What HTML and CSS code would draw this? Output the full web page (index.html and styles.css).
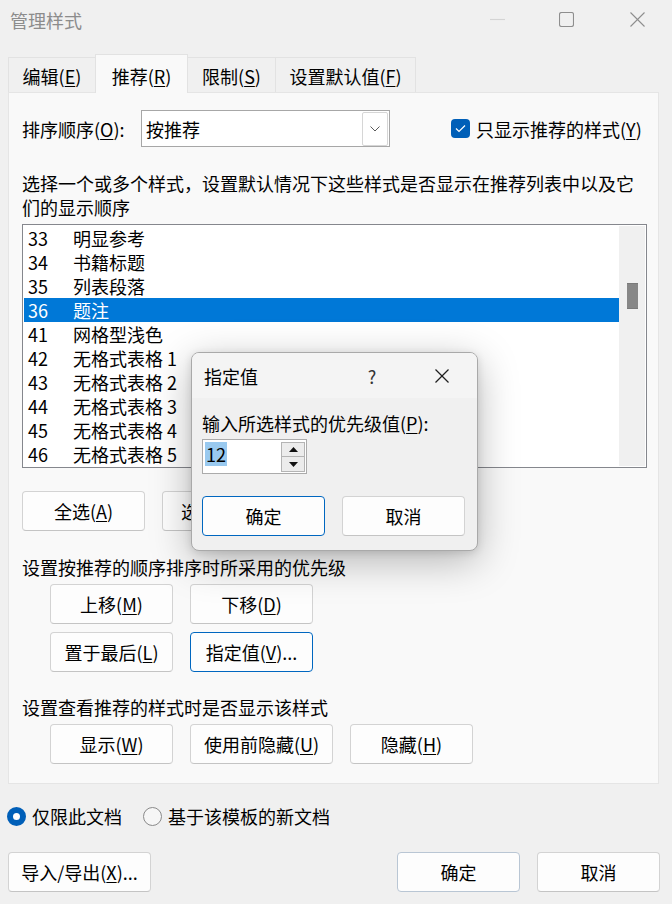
FILE: index.html
```html
<!DOCTYPE html>
<html lang="zh-CN">
<head>
<meta charset="utf-8">
<title>管理样式</title>
<link rel="stylesheet" href="styles.css">
</head>
<body>
<div class="window">
  <div class="titlebar">
    <span class="title">管理样式</span>
    <div class="controls">
      <svg class="ctl ctl-min" width="15" height="15" viewBox="0 0 15 15"><line x1="0" y1="7.5" x2="15" y2="7.5"/></svg>
      <svg class="ctl ctl-max" width="15" height="15" viewBox="0 0 15 15"><rect x="0.5" y="0.5" width="14" height="14" rx="2"/></svg>
      <svg class="ctl ctl-close" width="15" height="15" viewBox="0 0 15 15"><line x1="0.5" y1="0.5" x2="14.5" y2="14.5"/><line x1="14.5" y1="0.5" x2="0.5" y2="14.5"/></svg>
    </div>
  </div>

  <div class="tabs">
    <div class="tab tab-edit">编辑(<u>E</u>)</div>
    <div class="tab tab-active tab-rec">推荐(<u>R</u>)</div>
    <div class="tab tab-limit">限制(<u>S</u>)</div>
    <div class="tab tab-default">设置默认值(<u>F</u>)</div>
  </div>

  <div class="panel">
    <div class="sort-row">
      <span class="sort-label">排序顺序(<u>O</u>):</span>
      <div class="combo">
        <span class="combo-text">按推荐</span>
        <span class="combo-btn"><svg width="10" height="6" viewBox="0 0 10 6"><polyline points="0.5,0.5 5,5 9.5,0.5"/></svg></span>
      </div>
      <div class="check">
        <span class="checkbox"><svg width="19" height="19" viewBox="0 0 19 19"><polyline points="5,9.5 8,12.5 14,6.5"/></svg></span>
        <span>只显示推荐的样式(<u>Y</u>)</span>
      </div>
    </div>

    <p class="desc">选择一个或多个样式，设置默认情况下这些样式是否显示在推荐列表中以及它们的显示顺序</p>

    <div class="listbox">
      <div class="rows">
        <div class="row"><span class="num">33</span><span>明显参考</span></div>
        <div class="row"><span class="num">34</span><span>书籍标题</span></div>
        <div class="row"><span class="num">35</span><span>列表段落</span></div>
        <div class="row row-selected"><span class="num">36</span><span>题注</span></div>
        <div class="row"><span class="num">41</span><span>网格型浅色</span></div>
        <div class="row"><span class="num">42</span><span>无格式表格 1</span></div>
        <div class="row"><span class="num">43</span><span>无格式表格 2</span></div>
        <div class="row"><span class="num">44</span><span>无格式表格 3</span></div>
        <div class="row"><span class="num">45</span><span>无格式表格 4</span></div>
        <div class="row"><span class="num">46</span><span>无格式表格 5</span></div>
      </div>
      <div class="scrollbar"><div class="thumb"></div></div>
    </div>

    <div class="btn-row">
      <div class="btn">全选(<u>A</u>)</div>
      <div class="btn btn-builtin">选择内置样式(<u>B</u>)</div>
    </div>

    <div class="section-label">设置按推荐的顺序排序时所采用的优先级</div>
    <div class="btn-grid">
      <div class="btn">上移(<u>M</u>)</div>
      <div class="btn">下移(<u>D</u>)</div>
      <div class="btn">置于最后(<u>L</u>)</div>
      <div class="btn btn-focus">指定值(<u>V</u>)...</div>
    </div>

    <div class="section-label section-label-2">设置查看推荐的样式时是否显示该样式</div>
    <div class="btn-group">
      <div class="btn">显示(<u>W</u>)</div>
      <div class="btn btn-wide">使用前隐藏(<u>U</u>)</div>
      <div class="btn">隐藏(<u>H</u>)</div>
    </div>
  </div>

  <div class="radio-row">
    <div class="radio-opt">
      <span class="radio radio-on"></span>
      <span>仅限此文档</span>
    </div>
    <div class="radio-opt">
      <span class="radio"></span>
      <span>基于该模板的新文档</span>
    </div>
  </div>

  <div class="footer">
    <div class="btn btn-wide">导入/导出(<u>X</u>)...</div>
    <div class="btn btn-ok">确定</div>
    <div class="btn">取消</div>
  </div>

  <div class="dialog">
    <div class="dlg-title">
      <span>指定值</span>
      <span class="dlg-help">?</span>
      <svg class="dlg-close" width="14" height="14" viewBox="0 0 14 14"><line x1="0.5" y1="0.5" x2="13.5" y2="13.5"/><line x1="13.5" y1="0.5" x2="0.5" y2="13.5"/></svg>
    </div>
    <div class="dlg-body">
      <div class="dlg-label">输入所选样式的优先级值(<u>P</u>):</div>
      <div class="spin">
        <span class="spin-value">12</span>
        <div class="spin-btns">
          <span class="spin-btn spin-up"><svg width="9" height="5" viewBox="0 0 9 5"><polygon points="0,5 9,5 4.5,0"/></svg></span>
          <span class="spin-btn spin-down"><svg width="9" height="5" viewBox="0 0 9 5"><polygon points="0,0 9,0 4.5,5"/></svg></span>
        </div>
      </div>
      <div class="dlg-buttons">
        <div class="btn btn-focus">确定</div>
        <div class="btn">取消</div>
      </div>
    </div>
  </div>
</div>
</body>
</html>
```

FILE: styles.css
```css
* { box-sizing: border-box; }

html, body {
  margin: 0;
  padding: 0;
}

body {
  width: 672px;
  height: 904px;
  overflow: hidden;
  background: #f0f0f0;
  font-family: "Noto Sans CJK SC", "Noto Sans", sans-serif;
  font-size: 18px;
  line-height: 24px;
  color: #000;
}

u { text-underline-offset: 2px; text-decoration-thickness: 1px; }

.window {
  position: relative;
  width: 672px;
  height: 904px;
  display: flex;
  flex-direction: column;
}

/* Title bar */
.titlebar {
  height: 40px;
  display: flex;
  align-items: center;
  padding-left: 10px;
  flex-shrink: 0;
}

.title { color: #8c8c8c; }

.controls {
  margin-left: auto;
  display: flex;
  align-items: center;
  padding-right: 27px;
  margin-top: -1px;
}

.ctl { display: block; fill: none; stroke-width: 1.1; }
.ctl-min { stroke: #d4d4d4; margin-right: 54px; }
.ctl-max { stroke: #8e8e8e; margin-right: 56px; }
.ctl-close { stroke: #8e8e8e; }

/* Tabs */
.tabs {
  margin-top: 14px;
  height: 38px;
  display: flex;
  align-items: flex-end;
  padding-left: 8px;
  flex-shrink: 0;
}

.tab {
  height: 35px;
  padding: 0 0 4px;
  display: flex;
  align-items: flex-end;
  justify-content: center;
  background: #f0f0f0;
  border: 1px solid #e2e2e2;
  border-bottom: none;
  margin-left: -1px;
}

.tab:first-child { margin-left: 0; }

.tab-edit { width: 88px; }
.tab-rec { width: 93px; }
.tab-limit { width: 89px; }
.tab-default { width: 141px; }

.tab-active {
  position: relative;
  z-index: 1;
  height: 39px;
  margin-bottom: -1px;
  padding-bottom: 5px;
  background: #f9f9f9;
}

/* Panel */
.panel {
  margin: 0 13px 0 8px;
  height: 692px;
  border: 1px solid #e5e5e5;
  background: #f9f9f9;
  padding-left: 13px;
  display: flex;
  flex-direction: column;
  flex-shrink: 0;
}

.sort-row {
  margin-top: 17px;
  height: 37px;
  display: flex;
  align-items: center;
}

.sort-label { width: 119px; }

.combo {
  width: 249px;
  height: 37px;
  border: 1px solid #a7a7a7;
  background: #fff;
  display: flex;
  align-items: center;
  padding-left: 4px;
}

.combo-btn {
  margin-left: auto;
  margin-right: 1px;
  width: 26px;
  height: 34px;
  border: 1px solid #d6d6d6;
  border-radius: 2px;
  display: flex;
  align-items: center;
  justify-content: center;
}

.combo-btn svg { display: block; fill: none; stroke: #5a5a5a; stroke-width: 1; }

.check {
  margin-left: 61px;
  display: flex;
  align-items: center;
}

.checkbox {
  width: 19px;
  height: 19px;
  border-radius: 4px;
  background: #005fb8;
  margin-right: 6px;
  display: block;
}

.checkbox svg { display: block; fill: none; stroke: #fff; stroke-width: 1.2; }

.desc {
  margin: 24px 0 0;
  width: 620px;
}

/* Listbox */
.listbox {
  margin-top: 5px;
  width: 625px;
  height: 244px;
  border: 1px solid #85878d;
  padding: 1px;
  background: #fff;
  display: flex;
}

.rows { width: 595px; }

.row {
  height: 24px;
  display: flex;
  align-items: center;
  padding-left: 4px;
}

.num { width: 45px; }

.row-selected {
  background: #0078d7;
  color: #fff;
}

.scrollbar {
  width: 26px;
  height: 240px;
  background: #f0f0f0;
  padding: 57px 0 0 8px;
}

.thumb {
  width: 11px;
  height: 26px;
  background: #878787;
  border-top: 1px solid #7a7a7a;
  border-bottom: 1px solid #7a7a7a;
}

/* Buttons */
.btn {
  width: 123px;
  height: 40px;
  border: 1px solid #d3d3d3;
  border-bottom-color: #c4c4c4;
  border-radius: 4px;
  background: #fdfdfd;
  display: flex;
  align-items: center;
  justify-content: center;
  white-space: nowrap;
  flex-shrink: 0;
}

.btn-focus { border: 1px solid #0067c0; }

.btn-wide { width: 143px; }

.btn-builtin { width: 170px; }

.btn-row {
  margin-top: 23px;
  display: flex;
  gap: 17px;
}

.section-label { margin-top: 24px; }
.section-label-2 { margin-top: 23px; }

.btn-grid {
  margin-top: 5px;
  margin-left: 28px;
  display: grid;
  grid-template-columns: 123px 123px;
  gap: 8px 17px;
}

.btn-group {
  margin-top: 5px;
  margin-left: 28px;
  display: flex;
  gap: 17px;
}

/* Radios */
.radio-row {
  margin-top: 20px;
  height: 24px;
  padding-left: 7px;
  display: flex;
  align-items: center;
  gap: 21px;
}

.radio-opt {
  display: flex;
  align-items: center;
  gap: 6px;
}

.radio {
  width: 19px;
  height: 19px;
  border-radius: 50%;
  border: 1px solid #8a8a8a;
  background: #f6f6f6;
  display: block;
}

.radio-on {
  border: 6px solid #005fb8;
  background: #fff;
}

/* Footer */
.footer {
  margin-top: 24px;
  padding: 0 12px 0 8px;
  display: flex;
  gap: 17px;
}

.btn-ok {
  margin-left: auto;
  border-color: #b9c6d4;
}

/* Modal dialog */
.dialog {
  position: absolute;
  left: 191px;
  top: 352px;
  width: 287px;
  height: 199px;
  border: 1px solid #a9a9a9;
  border-radius: 8px;
  background: #f0f0f0;
  box-shadow: 0 10px 40px rgba(0, 0, 0, 0.28), 0 2px 8px rgba(0, 0, 0, 0.12);
  overflow: hidden;
  z-index: 5;
}

.dlg-title {
  height: 45px;
  background: #f4f4f4;
  display: flex;
  align-items: center;
  padding-left: 12px;
}

.dlg-help {
  margin-left: auto;
  width: 20px;
  text-align: center;
  color: #333;
}

.dlg-close {
  display: block;
  margin-left: 53px;
  margin-right: 28px;
  fill: none;
  stroke: #1f1f1f;
  stroke-width: 1.3;
}

.dlg-body {
  padding: 13px 0 0 10px;
}

.spin {
  margin-top: 4px;
  width: 105px;
  height: 35px;
  border: 1px solid #ababab;
  background: #fff;
  display: flex;
  align-items: flex-start;
  padding: 2px 1px 0 2px;
}

.spin-value {
  background: #99c9ef;
  height: 24px;
  line-height: 24px;
  padding: 0 1px;
}

.spin-btns {
  margin-left: auto;
  display: flex;
  flex-direction: column;
}

.spin-btn {
  width: 24px;
  display: flex;
  align-items: center;
  justify-content: center;
  background: #ececec;
  border: 1px solid #b4b4b4;
}

.spin-up { height: 15px; }
.spin-down { height: 15px; border-top: none; }

.spin-btn svg { display: block; fill: #111; }

.dlg-buttons {
  margin-top: 22px;
  display: flex;
  gap: 17px;
}
```
